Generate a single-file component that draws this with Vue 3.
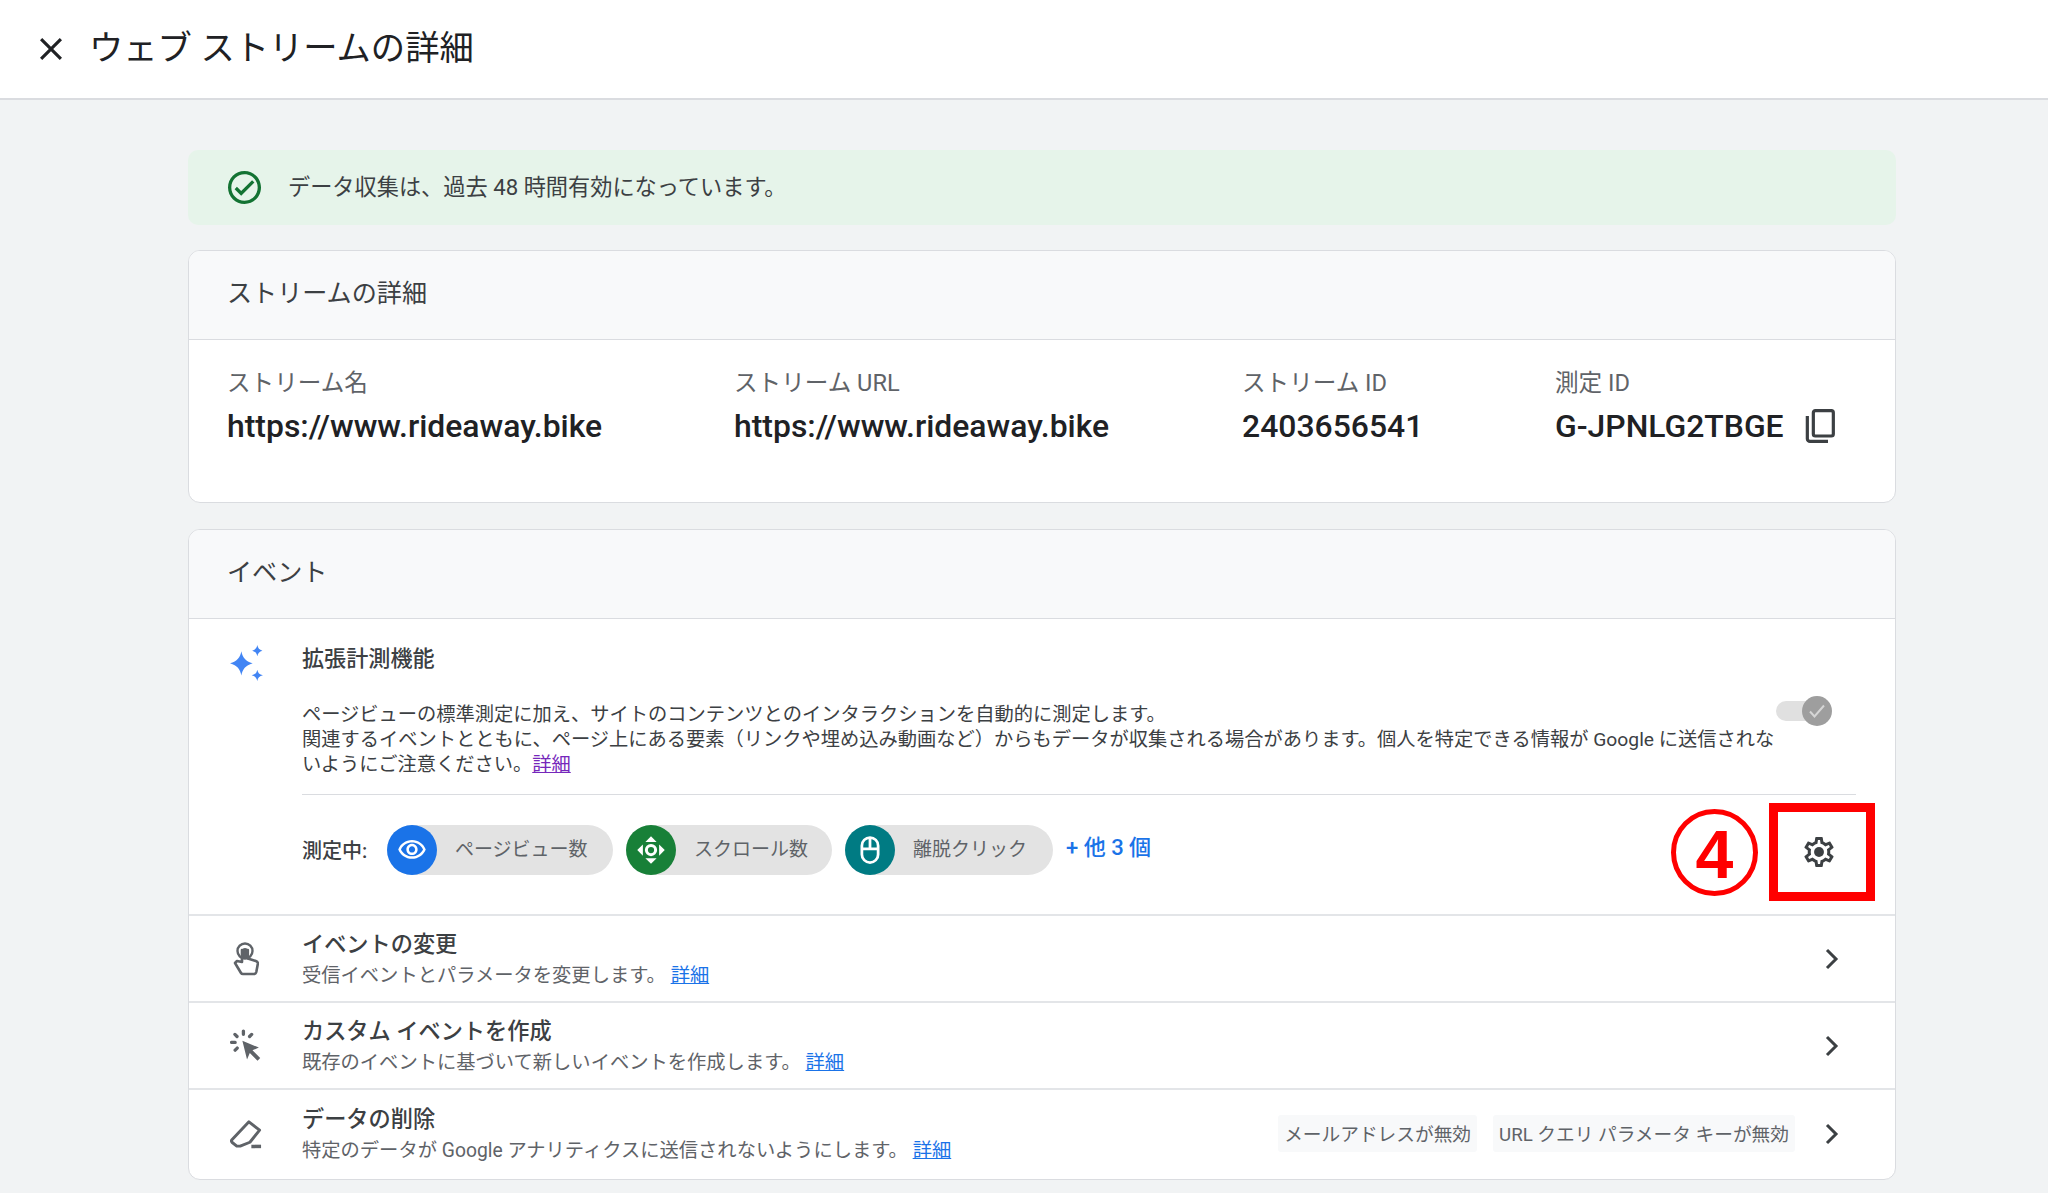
<script setup>
const fields = [
  { label: 'ストリーム名', value: 'https://www.rideaway.bike', cls: 'f1' },
  { label: 'ストリーム URL', value: 'https://www.rideaway.bike', cls: 'f2' },
  { label: 'ストリーム ID', value: '2403656541', cls: 'f3' },
]
const rows = [
  { title: 'イベントの変更', sub: '受信イベントとパラメータを変更します。', icon: 'touch', tags: [] },
  { title: 'カスタム イベントを作成', sub: '既存のイベントに基づいて新しいイベントを作成します。', icon: 'click', tags: [] },
  { title: 'データの削除', sub: '特定のデータが Google アナリティクスに送信されないようにします。', icon: 'erase', tags: ['メールアドレスが無効', 'URL クエリ パラメータ キーが無効'] },
]
</script>

<template>
  <div class="page">
    <header class="top">
      <svg class="close" viewBox="5 5 14 14"><path d="M19 6.41L17.59 5 12 10.59 6.41 5 5 6.41 10.59 12 5 17.59 6.41 19 12 13.41 17.59 19 19 17.59 13.41 12z" /></svg>
      <h1>ウェブ ストリームの詳細</h1>
    </header>
    <main class="main">
      <div class="banner">
        <svg class="ok" viewBox="2 2 20 20"><path d="M16.59 7.58L10 14.17l-2.59-2.58L6 13l4 4 8-8zM12 2C6.48 2 2 6.48 2 12s4.48 10 10 10 10-4.48 10-10S17.52 2 12 2zm0 18c-4.42 0-8-3.58-8-8s3.58-8 8-8 8 3.58 8 8-3.58 8-8 8z" /></svg>
        <span class="banner-text">データ収集は、過去 48 時間有効になっています。</span>
      </div>

      <section class="card details">
        <div class="card-head">ストリームの詳細</div>
        <div class="fields">
          <div v-for="f in fields" :key="f.label" class="field" :class="f.cls">
            <div class="label">{{ f.label }}</div>
            <div class="value">{{ f.value }}</div>
          </div>
          <div class="field f4">
            <div class="label">測定 ID</div>
            <div class="value-row">
              <span class="value">G-JPNLG2TBGE</span>
              <svg class="copy" viewBox="0 0 24 27" fill="none" stroke="#3c4043" stroke-width="2.4"><rect x="7" y="2" width="15" height="19" rx="1.5" /><path d="M2.5 6v17a2 2 0 0 0 2 2H18" /></svg>
            </div>
          </div>
        </div>
      </section>

      <section class="card events">
        <div class="card-head">イベント</div>
        <div class="enhanced">
          <svg class="sparkle" viewBox="0 0 36 36"><path fill="#4285f4" d="M13 6c1.2 6 4 9.600 11 11.800-7 2.200-9.800 5.800-11 11.800-1.200-6-4-9.600-11-11.800 7-2.200 9.800-5.800 11-11.800zM28.500 0c.6 3 2 4.700 5 5.500-3 .8-4.400 2.500-5 5.500-.6-3-2-4.700-5-5.500 3-.8 4.400-2.500 5-5.500zM28.500 24c.6 3 2 4.700 5.500 5.500-3.500.8-4.900 2.500-5.500 5.500-.6-3-2-4.700-5.500-5.500 3.500-.8 4.900-2.500 5.500-5.500z" /></svg>
          <div class="enh-body">
            <div class="enh-title">拡張計測機能</div>
            <div class="enh-desc">
              <p>ページビューの標準測定に加え、サイトのコンテンツとのインタラクションを自動的に測定します。<br />関連するイベントとともに、ページ上にある要素（リンクや埋め込み動画など）からもデータが収集される場合があります。個人を特定できる情報が Google に送信されな<br />いようにご注意ください。<a class="visited">詳細</a></p>
              <div class="toggle">
                <div class="thumb">
                  <svg viewBox="0 0 24 24" fill="none" stroke="#d5d5d5" stroke-width="2"><path d="M5 12.500l4.500 5L19 6.500" /></svg>
                </div>
              </div>
            </div>
            <div class="chips">
              <span class="measuring">測定中:</span>
              <div class="chip">
                <span class="bubble blue"><svg viewBox="0 0 24 24"><path fill="#fff" d="M12 6c3.790 0 7.170 2.130 8.820 5.500C19.170 14.870 15.790 17 12 17s-7.170-2.130-8.820-5.500C4.830 8.130 8.210 6 12 6m0-2C7 4 2.730 7.110 1 11.500 2.730 15.890 7 19 12 19s9.270-3.110 11-7.500C21.270 7.110 17 4 12 4zm0 5c1.380 0 2.500 1.120 2.500 2.500S13.380 14 12 14s-2.500-1.120-2.500-2.500S10.620 9 12 9m0-2c-2.480 0-4.500 2.020-4.500 4.500S9.520 16 12 16s4.500-2.020 4.500-4.500S14.480 7 12 7z" /></svg></span>
                <span class="chip-text">ページビュー数</span>
              </div>
              <div class="chip c2">
                <span class="bubble green"><svg viewBox="0 0 24 24"><path fill="#fff" d="M12 1l4.500 4.500h-9zM12 23l-4.500-4.500h9zM1 12l4.500-4.500v9zM23 12l-4.500 4.500v-9z" /><circle cx="12" cy="12" r="3.700" fill="none" stroke="#fff" stroke-width="2.400" /></svg></span>
                <span class="chip-text">スクロール数</span>
              </div>
              <div class="chip c3">
                <span class="bubble teal"><svg viewBox="0 0 24 24" fill="none" stroke="#fff" stroke-width="2.200"><rect x="5.500" y="2" width="13" height="20" rx="6.500" /><path d="M5.500 11h13M12 2v9" /></svg></span>
                <span class="chip-text">離脱クリック</span>
              </div>
              <a class="more">+ 他 3 個</a>
              <svg class="gear" viewBox="0 0 24 24"><path fill="#3c4043" d="M19.430 12.980c.04-.32.07-.64.07-.98 0-.34-.03-.66-.07-.98l2.110-1.650c.19-.15.24-.42.12-.64l-2-3.460c-.09-.16-.26-.25-.44-.25-.06 0-.12.01-.17.03l-2.490 1c-.52-.4-1.080-.73-1.690-.98l-.38-2.650C14.460 2.180 14.250 2 14 2h-4c-.25 0-.46.18-.49.42l-.38 2.650c-.61.25-1.170.59-1.690.98l-2.490-1c-.06-.02-.12-.03-.18-.03-.17 0-.34.09-.43.25l-2 3.460c-.13.22-.07.49.12.64l2.110 1.650c-.04.32-.07.65-.07.98 0 .33.03.66.07.98l-2.110 1.650c-.19.15-.24.42-.12.64l2 3.460c.09.16.26.25.44.25.06 0 .12-.01.17-.03l2.490-1c.52.4 1.080.73 1.690.98l.38 2.650c.03.24.24.42.49.42h4c.25 0 .46-.18.49-.42l.38-2.650c.61-.25 1.170-.59 1.690-.98l2.490 1c.06.02.12.03.18.03.17 0 .34-.09.43-.25l2-3.460c.12-.22.07-.49-.12-.64l-2.110-1.650zm-1.980-1.710c.04.31.05.52.05.73 0 .21-.02.43-.05.73l-.14 1.130.89.7 1.080.84-.7 1.210-1.270-.51-1.040-.42-.9.68c-.43.32-.84.56-1.250.73l-1.060.43-.16 1.130-.2 1.350h-1.400l-.19-1.350-.16-1.130-1.060-.43c-.43-.18-.83-.41-1.230-.71l-.91-.7-1.060.43-1.270.51-.7-1.210 1.080-.84.89-.7-.14-1.130c-.03-.31-.05-.54-.05-.74s.02-.43.05-.73l.14-1.130-.89-.7-1.080-.84.7-1.210 1.270.51 1.040.42.9-.68c.43-.32.84-.56 1.250-.73l1.060-.43.16-1.130.2-1.350h1.390l.19 1.350.16 1.130 1.060.43c.43.18.83.41 1.230.71l.91.7 1.060-.43 1.270-.51.7 1.210-1.070.85-.89.7.14 1.130z" /><circle cx="12" cy="12" r="3.300" fill="#3c4043" /></svg>
              <div class="num-badge">4</div>
              <div class="red-box"></div>
            </div>
          </div>
        </div>

        <div v-for="r in rows" :key="r.title" class="row">
          <div class="row-icon">
            <svg v-if="r.icon === 'touch'" class="i-touch" viewBox="0 0 26 34" fill="none" stroke="#5f6368" stroke-width="2.600" stroke-linejoin="round" stroke-linecap="round"><circle cx="12" cy="9" r="7.500" stroke-width="2.400" /><path fill="#5f6368" stroke="none" d="M9 9a3 3 0 0 1 6 0v7H9z" /><path d="M9 8v12l-5-1-2 2 6 10c.5.8 1 1 2 1h11c1.500 0 2-1 2.300-2l1.500-8c.2-1.500-.5-2.500-2-3l-8-2.500V8" /></svg>
            <svg v-else-if="r.icon === 'click'" class="i-std" viewBox="0 0 32 32"><path fill="#5f6368" d="M12 11l16 6.500-6.200 2.700 7.500 7.500-2.600 2.600-7.500-7.500-2.700 6.200z" /><g stroke="#5f6368" stroke-width="3.200" stroke-linecap="round"><path d="M13 1.500v3.200M4.800 4.800l2 2M1.500 12.500h3.500M21 4.800l-2 2M5 20l2-2" /></g></svg>
            <svg v-else class="i-std" viewBox="0 0 34 30" fill="none" stroke="#5f6368" stroke-width="3" stroke-linejoin="round"><path d="M19.500 2.500l11 8.500-10 12.500-10 4H7L2 23.500c-.6-.8-.6-1.900 0-2.600z" /><path d="M22 27.800h10" stroke-width="3.600" /></svg>
          </div>
          <div class="row-text">
            <div class="row-title">{{ r.title }}</div>
            <div class="row-sub">{{ r.sub }}&nbsp;<a class="link">詳細</a></div>
          </div>
          <span v-for="t in r.tags" :key="t" class="tag">{{ t }}</span>
          <svg class="chev" viewBox="0 0 14 22" fill="none" stroke="#3c4043" stroke-width="3"><path d="M2 2l9 9-9 9" /></svg>
        </div>
      </section>
    </main>
  </div>
</template>

<style>
body { background: #fff; overflow: hidden; }
</style>

<style scoped>
.page {
  height: 1193px;
  background: #f1f3f4;
  font-family: Roboto, "Noto Sans CJK JP", sans-serif;
  color: #202124;
  overflow: hidden;
}
.top {
  height: 98px;
  background: #fff;
  border-bottom: 2px solid #dadce0;
  display: flex;
  align-items: center;
  padding-left: 40px;
}
.close { width: 22px; height: 22px; fill: #202124; margin-right: 27px; }
h1 { margin: 0; padding-bottom: 8px; font-size: 34.300px; font-weight: 400; color: #202124; }
.main { padding: 50px 152px 0 188px; }
.banner {
  height: 75px;
  background: #e6f4ea;
  border-radius: 10px;
  display: flex;
  align-items: center;
  padding-left: 40px;
  font-size: 22.200px;
  color: #3c4043;
  margin-bottom: 25px;
}
.banner-text { padding-bottom: 5px; }
.ok { width: 33px; height: 33px; fill: #137333; margin-right: 27px; }
.card {
  background: #fff;
  border: 1px solid #dadce0;
  border-radius: 12px;
  overflow: hidden;
}
.card-head {
  height: 89px;
  box-sizing: border-box;
  background: #f8f9fa;
  border-bottom: 1px solid #dadce0;
  display: flex;
  align-items: center;
  padding: 0 0 8px 38px;
  font-size: 25.100px;
  color: #3c4043;
}
.details { height: 253px; box-sizing: border-box; margin-bottom: 26px; }
.fields { display: flex; padding: 27px 0 0 38px; }
.field { flex: none; }
.f1 { width: 507px; }
.f2 { width: 508px; }
.f3 { width: 313px; }
.label { font-size: 23.600px; line-height: 32px; color: #5f6368; }
.value { font-size: 31.900px; line-height: 54px; color: #202124; font-weight: 500; }
.value-row { display: flex; align-items: center; }
.copy { width: 32px; height: 36px; margin-left: 20px; }
.events { height: 651px; box-sizing: border-box; }
.enhanced { display: flex; padding: 26px 39px 0 39px; height: 297px; box-sizing: border-box; border-bottom: 2px solid #e3e5e8; }
.sparkle { width: 37px; height: 37px; margin: 0 37px 0 0; flex: none; }
.enh-body { flex: 1; min-width: 0; }
.enh-title { font-size: 22.100px; line-height: 26px; font-weight: 500; color: #3c4043; }
.enh-desc { display: flex; margin-top: 31px; padding-bottom: 17px; border-bottom: 1px solid #dadce0; }
.enh-desc p { margin: 0; width: 1474px; font-size: 19.250px; line-height: 25px; color: #3c4043; flex: none; white-space: nowrap; }
.visited { color: #7627bb; text-decoration: underline; }
.toggle { position: relative; width: 49px; height: 20px; margin-top: -1px; background: #e0e0e0; border-radius: 10px; flex: none; }
.thumb { position: absolute; right: -7px; top: -5px; width: 30px; height: 30px; border-radius: 50%; background: #9e9e9e; display: flex; align-items: center; justify-content: center; }
.thumb svg { width: 24px; height: 24px; }
.chips { position: relative; display: flex; align-items: center; padding-top: 29px; }
.measuring { font-size: 20px; color: #3c4043; font-weight: 500; width: 85px; line-height: 50px; padding-top: 2px; }
.chip { width: 226px; height: 50px; border-radius: 25px; background: #e3e3e3; display: flex; align-items: center; margin-right: 13px; }
.c2 { width: 206px; }
.c3 { width: 208px; }
.bubble { width: 50px; height: 50px; border-radius: 50%; display: flex; align-items: center; justify-content: center; flex: none; }
.bubble svg { width: 30px; height: 30px; }
.blue { background: #1a73e8; }
.green { background: #188038; }
.teal { background: #007b83; }
.chip-text { font-size: 19px; color: #5f6368; margin-left: 18px; padding-bottom: 5px; }
.more { font-size: 22px; color: #1a73e8; font-weight: 500; padding-bottom: 10px; }
.gear { width: 36px; height: 36px; margin-left: auto; margin-right: 19px; margin-top: 3px; }
.num-badge {
  position: absolute;
  right: 98px;
  top: 14px;
  width: 77px;
  height: 77px;
  border: 5px solid #ff0000;
  border-radius: 50%;
  color: #ff0000;
  font-family: "Liberation Sans", sans-serif;
  font-weight: 700;
  font-size: 68px;
  line-height: 80px;
  text-align: center;
}
.red-box {
  position: absolute;
  right: -19px;
  top: 8px;
  width: 88px;
  height: 80px;
  border: 9.500px solid #ff0000;
}
.row { height: 87px; box-sizing: border-box; display: flex; align-items: center; padding-left: 39px; padding-right: 56px; border-bottom: 2px solid #e3e5e8; }
.row:last-child { border-bottom: 0; }
.row-icon { width: 74px; flex: none; display: flex; box-sizing: border-box; }
.i-std { width: 33px; height: 36px; margin-left: 2px; }
.i-touch { width: 26px; height: 34px; margin-left: 5px; }
.row-text { flex: 1; min-width: 0; padding-top: 3px; }
.row-title { font-size: 22.200px; line-height: 30px; font-weight: 500; color: #3c4043; }
.row-sub { font-size: 19.300px; line-height: 33px; color: #5f6368; }
.link { color: #1a73e8; text-decoration: underline; }
.tag { height: 37px; padding: 0 6px; background: #f8f9fa; border-radius: 3px; font-size: 18.700px; line-height: 40px; color: #5f6368; margin-right: 16px; white-space: nowrap; }
.chev { width: 14px; height: 22px; margin-left: 25px; flex: none; }
.tag + .chev { margin-left: 14px; }
</style>
